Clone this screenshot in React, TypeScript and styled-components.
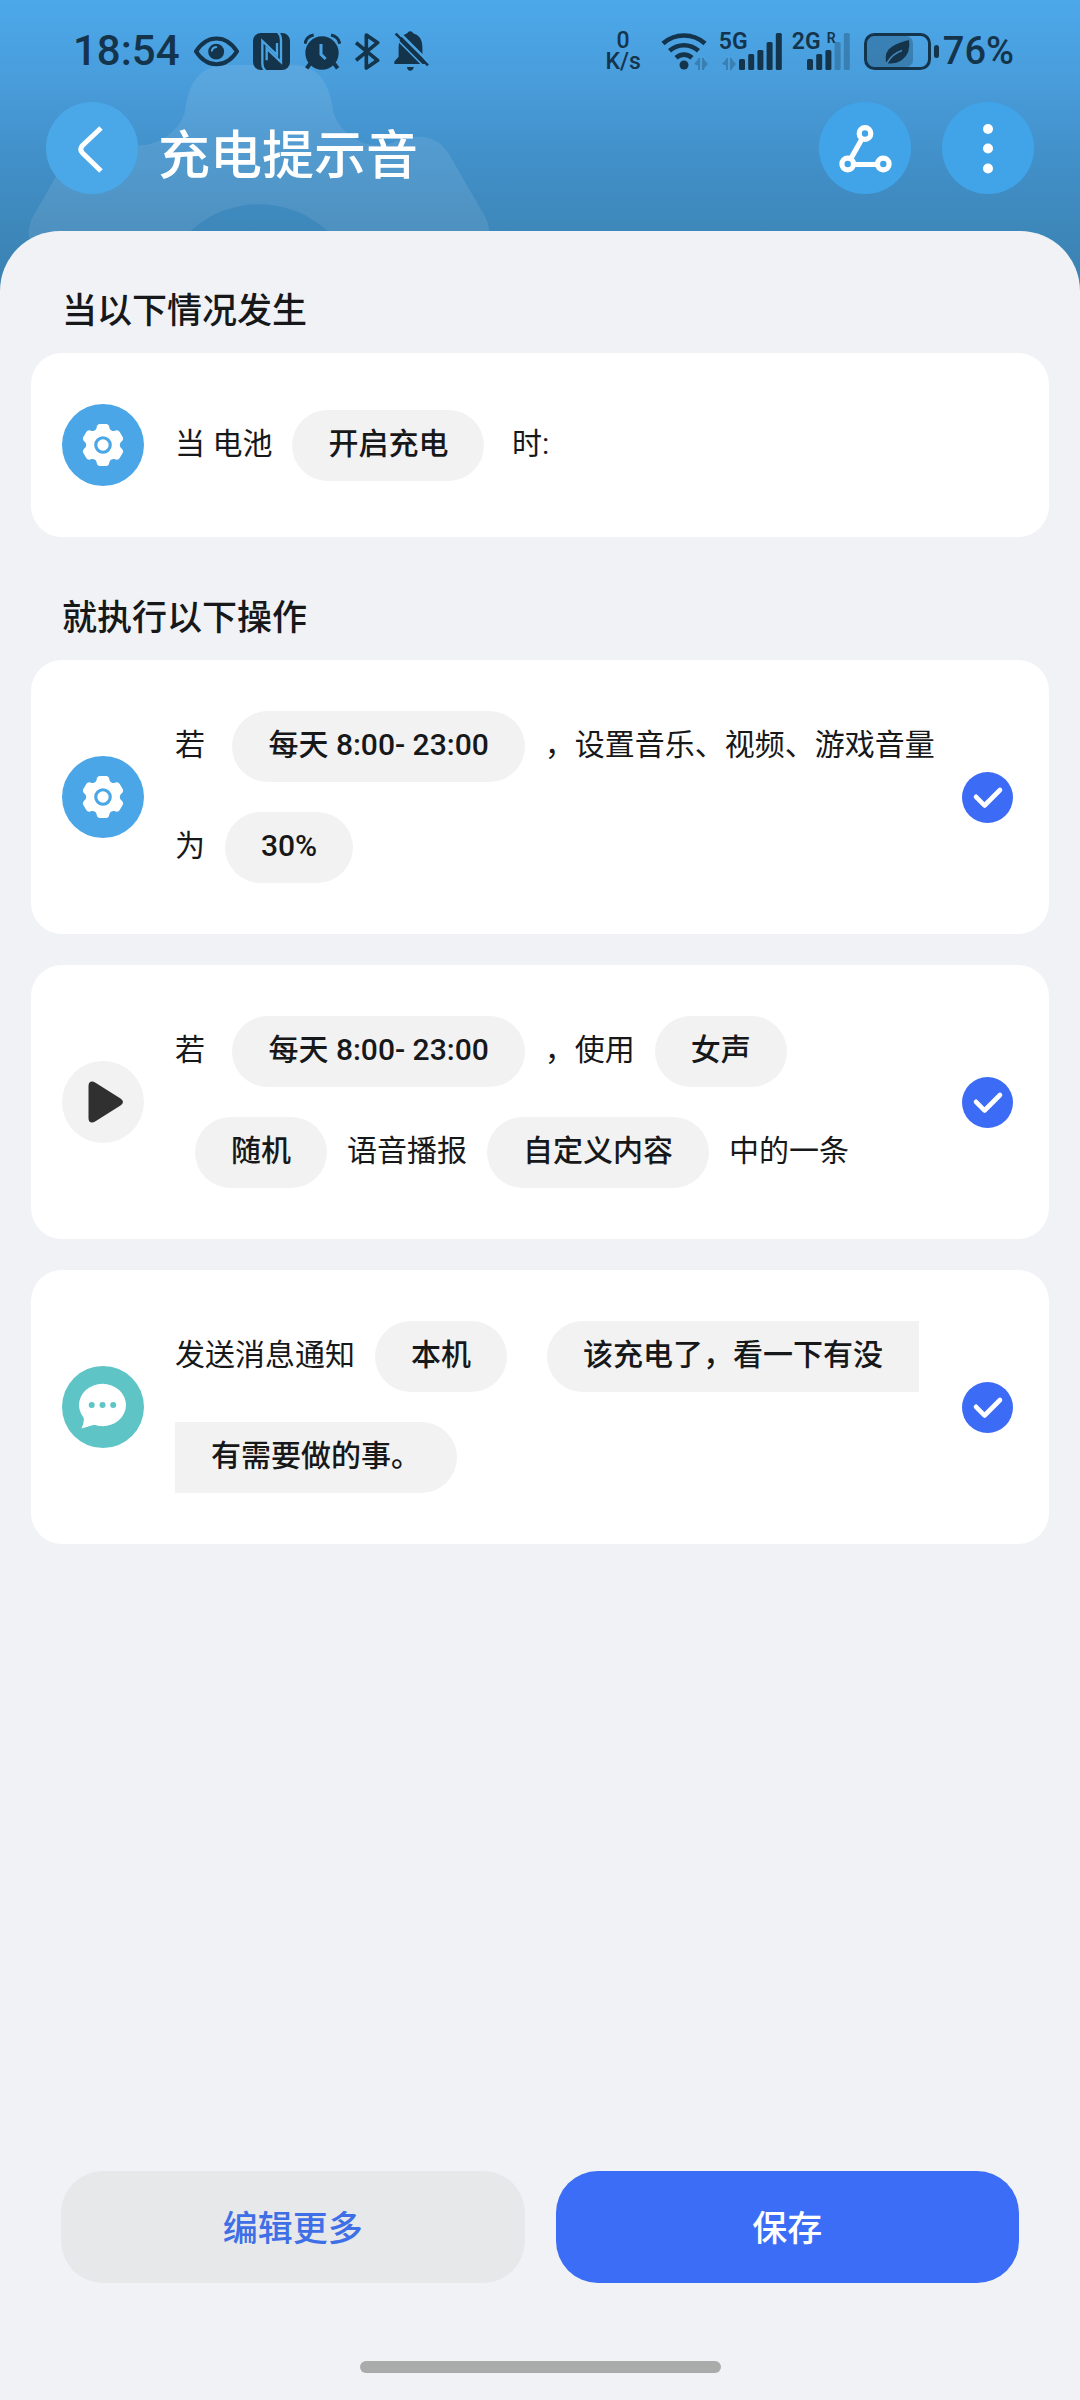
import React from "react";
import styled, { createGlobalStyle, css } from "styled-components";

const INK = "#14344c";
const INK_SOFT = "rgba(20, 52, 76, 0.3)";
const SKY = "#4aa3e2";

const GlobalStyle = createGlobalStyle`
  *, *::before, *::after { box-sizing: border-box; }
  body {
    margin: 0;
    background: #f0f2f6;
    color: #17181a;
    font-family: Roboto, "Noto Sans CJK SC", sans-serif;
  }
  button { font: inherit; color: inherit; border: 0; padding: 0; cursor: pointer; }
  svg { display: block; flex: none; }
`;

const Page = styled.div`
  position: relative;
  display: flex;
  flex-direction: column;
  min-height: 100vh;
  overflow: hidden;
  background: linear-gradient(#4ca8ea 0, #499ddb 80px, #4291cb 150px, #3d87ba 231px, #3b80b0 300px);
`;

const Watermark = styled.div`
  position: absolute;
  top: 65px;
  left: 19px;
  color: rgba(255, 255, 255, 0.09);
  pointer-events: none;
`;

const StatusBar = styled.div`
  position: relative;
  display: flex;
  justify-content: space-between;
  align-items: center;
  height: 102px;
  padding: 0 66px 0 73px;
  color: ${INK};
`;

const StatusGroup = styled.div<{ $gap: number }>`
  display: flex;
  align-items: center;
  gap: ${(p) => p.$gap}px;
`;

const Clock = styled.span`
  font-size: 42px;
  line-height: 48px;
  font-weight: 500;
`;

const BatteryLevel = styled.span`
  font-size: 38px;
  line-height: 48px;
  font-weight: 500;
`;

const NetSpeed = styled.span`
  margin-right: 8px;
  font-size: 23px;
  line-height: 21px;
  font-weight: 500;
  text-align: center;
`;

const Signal = styled.div`
  position: relative;
`;

const SignalLabel = styled.span`
  position: absolute;
  top: -3px;
  left: -2px;
  font-size: 23px;
  line-height: 23px;
  font-weight: 600;
`;

const RoamLabel = styled(SignalLabel)`
  left: 33px;
  font-size: 14px;
  line-height: 16px;
`;

const BatteryGroup = styled.div`
  display: flex;
  align-items: center;
  gap: 4px;
`;

const Header = styled.header`
  position: relative;
  display: flex;
  align-items: center;
  gap: 31px;
  padding: 0 46px 37px;
`;

const RoundButton = styled.button<{ $tone: string }>`
  display: flex;
  flex: none;
  width: 92px;
  height: 92px;
  border-radius: 50%;
  background: ${(p) => p.$tone};
`;

const HeaderLead = styled.div`
  display: flex;
  flex: 1;
  align-items: center;
  gap: 20px;
`;

const Title = styled.h1`
  margin: 0;
  padding-top: 18px;
  color: #fff;
  font-size: 52px;
  line-height: 60px;
  font-weight: 500;
`;

const Sheet = styled.main`
  position: relative;
  display: flex;
  flex: 1;
  flex-direction: column;
  padding: 58px 31px 27px;
  border-radius: 60px 60px 0 0;
  background: #f0f2f6;
`;

const Section = styled.section`
  margin-bottom: 59px;
`;

const SectionTitle = styled.h2`
  margin: 0 0 18px;
  padding-left: 31px;
  font-size: 35px;
  line-height: 46px;
  font-weight: 500;
`;

const CardList = styled.div`
  display: flex;
  flex-direction: column;
  gap: 31px;
`;

const Card = styled.div`
  display: flex;
  align-items: center;
  padding: 51px 36px 51px 31px;
  border-radius: 31px;
  background: #fff;
`;

const CardIcon = styled.span<{ $tone: string; $ink: string }>`
  display: flex;
  flex: none;
  align-items: center;
  justify-content: center;
  width: 82px;
  height: 82px;
  margin-right: 31px;
  border-radius: 50%;
  background: ${(p) => p.$tone};
  color: ${(p) => p.$ink};
`;

const Sentence = styled.div`
  display: flex;
  flex: 1;
  flex-direction: column;
  gap: 30px;
  font-size: 30px;
  line-height: 36px;
`;

const Line = styled.div<{ $indent?: boolean }>`
  display: flex;
  flex-wrap: wrap;
  align-items: center;
  row-gap: 30px;
  padding-left: ${(p) => (p.$indent ? 20 : 0)}px;
`;

const Words = styled.span`
  padding-bottom: 3px;
  white-space: pre;
`;

type Edge = "full" | "start" | "end";

const chipEdge = {
  full: css`
    border-radius: 36px;
  `,
  start: css`
    border-radius: 36px 0 0 36px;
  `,
  end: css`
    border-radius: 0 36px 36px 0;
  `,
};

const Chip = styled.button<{ $edge?: Edge; $flush?: boolean }>`
  height: 71px;
  margin: 0 20px 0 ${(p) => (p.$flush ? 0 : 20)}px;
  padding: 0 36px 3px;
  background: #f2f2f2;
  font-weight: 500;
  ${(p) => chipEdge[p.$edge ?? "full"]}
  ${(p) => p.$edge === "start" && "margin-right: 0;"}
`;

const CheckBox = styled.label`
  position: relative;
  flex: none;
  width: 51px;
  height: 51px;
  color: #fff;

  input {
    position: absolute;
    inset: 0;
    width: 100%;
    height: 100%;
    margin: 0;
    appearance: none;
    border: 3px solid #c4c7cc;
    border-radius: 50%;
  }
  input:checked {
    border: 0;
    background: #3c6cf5;
  }
  svg {
    position: relative;
    pointer-events: none;
  }
`;

const Actions = styled.div`
  display: flex;
  gap: 31px;
  margin-top: auto;
  padding: 0 30px 78px;
`;

const ActionButton = styled.button<{ $primary?: boolean }>`
  flex: 1;
  height: 112px;
  padding-bottom: 4px;
  border-radius: 42px;
  background: ${(p) => (p.$primary ? "#3b6df6" : "#e6e8ea")};
  color: ${(p) => (p.$primary ? "#fff" : "#3f6fe6")};
  font-size: 35px;
  font-weight: 500;
`;

const HomeBar = styled.div`
  align-self: center;
  width: 361px;
  height: 12px;
  border-radius: 6px;
  background: #aaacac;
`;

/* One side of the gear: a rounded tooth pointing up and the valley after it. */
const tooth: [string, [number, number][]][] = [
  ["Q", [[-16.5, -36.8], [-15.5, -40]]],
  ["Q", [[-14.5, -50], [-7, -50]]],
  ["L", [[7, -50]]],
  ["Q", [[14.5, -50], [15.5, -40]]],
  ["Q", [[16.5, -36.8], [20, -34.6]]],
];

function gearOutline() {
  let d = "M-20 -34.6";
  for (let i = 0; i < 6; i++) {
    const a = (i * Math.PI) / 3;
    const turn = ([x, y]: [number, number]) =>
      `${(x * Math.cos(a) - y * Math.sin(a)).toFixed(2)} ${(x * Math.sin(a) + y * Math.cos(a)).toFixed(2)}`;
    tooth.forEach(([cmd, pts]) => {
      d += cmd + pts.map(turn).join(" ");
    });
  }
  return d + "Z";
}

const GEAR = gearOutline();

const GearIcon = ({ size }: { size: number }) => (
  <svg width={size} height={size} viewBox="-50 -50 100 100" fill="currentColor" fillRule="evenodd">
    <path d={GEAR + "M-21 0a21 21 0 1 0 42 0a21 21 0 1 0 -42 0Z"} />
    <circle r="13.5" />
  </svg>
);

const PlayIcon = () => (
  <svg width="82" height="82" viewBox="0 0 82 82" fill="currentColor">
    <path d="M26.500 25Q26.500 20.500 30 20.500Q31.500 20.500 33.500 21.800L58.500 37.500Q61 39.200 61 41Q61 42.800 58.500 44.500L33.500 60.200Q31.500 61.500 30 61.500Q26.500 61.500 26.500 57Z" />
  </svg>
);

const ChatIcon = () => (
  <svg width="82" height="82" viewBox="0 0 82 82" fill="#fff">
    <ellipse cx="40.500" cy="39" rx="23.500" ry="21.200" />
    <path d="M20 46Q24 53 19.500 62.500L33 58.500L36 50Z" />
    <g fill="#5fc4c6">
      <circle cx="29.700" cy="39" r="3" />
      <circle cx="40.500" cy="39" r="3" />
      <circle cx="51.200" cy="39" r="3" />
    </g>
  </svg>
);

const CheckMark = () => (
  <svg width="51" height="51" viewBox="0 0 51 51" fill="none" stroke="currentColor" strokeWidth="4.600" strokeLinecap="round" strokeLinejoin="round">
    <path d="M14 24.800L22.500 33.500L38 18" />
  </svg>
);

const BackIcon = () => (
  <svg width="92" height="92" viewBox="0 0 92 92" fill="none" stroke="#fff" strokeWidth="5">
    <path d="M55 26L36.500 43.500Q33 47.200 36.500 51L55 69" />
  </svg>
);

const FlowIcon = () => (
  <svg width="92" height="92" viewBox="0 0 92 92" fill="none" stroke="#fff" strokeWidth="5.200">
    <circle cx="46" cy="31.500" r="5.800" />
    <circle cx="28.700" cy="62" r="5.800" />
    <circle cx="64.300" cy="62" r="5.800" />
    <path d="M43.200 36.500L31.600 57M34.500 62.500H58.500" />
  </svg>
);

const MoreIcon = () => (
  <svg width="92" height="92" viewBox="0 0 92 92" fill="#fff">
    <circle cx="46" cy="27" r="5" />
    <circle cx="46" cy="46.500" r="5" />
    <circle cx="46" cy="66.500" r="5" />
  </svg>
);

const EyeIcon = () => (
  <svg width="45" height="37" viewBox="21 37 136 111">
    <path d="M27 92Q52 53 89 53Q126 53 151 92Q126 131 89 131Q52 131 27 92Z" fill="none" stroke={INK} strokeWidth="12" strokeLinejoin="round" />
    <circle cx="88" cy="93" r="24" fill={INK} />
    <path d="M75 90Q77 80 88 79" fill="none" stroke={SKY} strokeWidth="6" strokeLinecap="round" />
  </svg>
);

const NfcIcon = () => (
  <svg width="37" height="37" viewBox="0 0 111 111">
    <rect width="111" height="111" rx="24" fill={INK} />
    <g fill="none" stroke={SKY} strokeWidth="7">
      <path d="M38 114Q28 106 28 92V24L72 66V30" />
      <path d="M74 -3Q84 6 84 20V87L41 46V82" />
    </g>
  </svg>
);

const AlarmIcon = () => (
  <svg width="37" height="37" viewBox="356 37 111 111">
    <circle cx="410" cy="97" r="50" fill={INK} />
    <g fill="none" stroke={INK} strokeWidth="13">
      <path d="M375 128L364 143M446 128L457 143" strokeWidth="12" />
      <path d="M359 69Q362 48 385 43M463 69Q460 48 437 43" strokeWidth="9" />
    </g>
    <path d="M407 70V101L421 115" fill="none" stroke={SKY} strokeWidth="9" />
  </svg>
);

const BluetoothIcon = () => (
  <svg width="25" height="37" viewBox="509 35 75 111" fill="none" stroke={INK} strokeWidth="11" strokeLinejoin="round">
    <path d="M512 64L577 117L543 140V41L577 64L512 117" />
  </svg>
);

const BellOffIcon = () => (
  <svg width="35" height="40" viewBox="623 32 106 121">
    <path d="M663 39Q665 33 672 33Q679 33 681 39Q708 46 709 80V108L722 132H624V124L637 110V80Q638 46 663 39Z" fill={INK} />
    <path d="M662 141H683Q681 152 672 152Q664 152 662 141Z" fill={INK} />
    <path d="M636 34L732 130" stroke={SKY} strokeWidth="8" />
    <path d="M622 48L718 144" stroke={SKY} strokeWidth="5" />
    <path d="M628 40L726 136" stroke={INK} strokeWidth="8" />
  </svg>
);

const DataArrows = ({ x }: { x: number }) => (
  <path
    d={`M${x} 31L${x + 4} 26.500V25H${x + 6}V37H${x + 4}V32.500ZM${x + 14} 31L${x + 10} 35.500V37H${x + 8}V25H${x + 10}V26.500Z`}
    fill={INK_SOFT}
  />
);

const WifiIcon = () => (
  <svg width="48" height="37" viewBox="0 0 48 37">
    <g fill="none" stroke={INK} strokeWidth="4.600">
      <path d="M2 10.500Q11 2.500 23 2.500Q35 2.500 44 10.500" />
      <path d="M8.500 17.800Q15 12.200 23 12.200Q31 12.200 37.500 17.800" />
      <path d="M15 24.800Q18.500 21.600 23 21.600Q27.500 21.600 31 24.800" />
    </g>
    <circle cx="23" cy="32" r="4.500" fill={INK} />
    <DataArrows x={33} />
  </svg>
);

const BARS = [26, 21, 17, 9, 0];

const SignalBars = ({ x, width, active, arrows }: { x: number; width: number; active: number; arrows?: boolean }) => (
  <svg width={width} height="37" viewBox={`0 0 ${width} 37`}>
    {BARS.map((top, i) => (
      <rect key={top} x={x + i * 9.2} y={top} width="6" height={37 - top} rx="1.500" fill={i < active ? INK : INK_SOFT} />
    ))}
    {arrows && <DataArrows x={1} />}
  </svg>
);

const BatteryIcon = () => (
  <svg width="75" height="37" viewBox="0 0 75 37">
    <rect x="3" y="3" width="46" height="31" rx="7" fill={INK_SOFT} />
    <rect x="1.500" y="1.500" width="64" height="34" rx="9" fill="none" stroke={INK} strokeWidth="3" />
    <rect x="70" y="12" width="5" height="13" rx="2.500" fill={INK} />
    <path d="M22 29Q20 18 29 13Q35 9.500 45 7Q47 20 38 27Q32 31 24.500 30.500Z" fill={INK} />
    <path d="M23 30Q28 21 38 17.500" fill="none" stroke="#4286b8" strokeWidth="1.600" />
  </svg>
);

const Check = ({ label }: { label: string }) => (
  <CheckBox>
    <input type="checkbox" defaultChecked aria-label={label} />
    <CheckMark />
  </CheckBox>
);

export default function App() {
  return (
    <>
      <GlobalStyle />
      <Page lang="zh-CN">
        <Watermark>
          <GearIcon size={480} />
        </Watermark>

        <StatusBar>
          <StatusGroup $gap={14}>
            <Clock>18:54</Clock>
            <EyeIcon />
            <NfcIcon />
            <AlarmIcon />
            <BluetoothIcon />
            <BellOffIcon />
          </StatusGroup>
          <StatusGroup $gap={12}>
            <NetSpeed>
              0<br />
              K/s
            </NetSpeed>
            <WifiIcon />
            <Signal>
              <SignalLabel>5G</SignalLabel>
              <SignalBars x={18} width={61} active={5} arrows />
            </Signal>
            <Signal>
              <SignalLabel>2G</SignalLabel>
              <RoamLabel>R</RoamLabel>
              <SignalBars x={13} width={58} active={3} />
            </Signal>
            <BatteryGroup>
              <BatteryIcon />
              <BatteryLevel>76%</BatteryLevel>
            </BatteryGroup>
          </StatusGroup>
        </StatusBar>

        <Header>
          <HeaderLead>
            <RoundButton $tone="#4aa8e8" aria-label="返回">
              <BackIcon />
            </RoundButton>
            <Title>充电提示音</Title>
          </HeaderLead>
          <RoundButton $tone="#41a4e8" aria-label="流程">
            <FlowIcon />
          </RoundButton>
          <RoundButton $tone="#41a4e8" aria-label="更多">
            <MoreIcon />
          </RoundButton>
        </Header>

        <Sheet>
          <Section>
            <SectionTitle>当以下情况发生</SectionTitle>
            <Card>
              <CardIcon $tone="#4aa6e6" $ink="#fff">
                <GearIcon size={42} />
              </CardIcon>
              <Sentence>
                <Line>
                  <Words>当 电池</Words>
                  <Chip>开启充电</Chip>
                  <Words> 时:</Words>
                </Line>
              </Sentence>
            </Card>
          </Section>

          <Section>
            <SectionTitle>就执行以下操作</SectionTitle>
            <CardList>
              <Card>
                <CardIcon $tone="#4aa6e6" $ink="#fff">
                  <GearIcon size={42} />
                </CardIcon>
                <Sentence>
                  <Line>
                    <Words>若 </Words>
                    <Chip>每天 8:00- 23:00</Chip>
                    <Words>，设置音乐、视频、游戏音量</Words>
                  </Line>
                  <Line>
                    <Words>为</Words>
                    <Chip>30%</Chip>
                  </Line>
                </Sentence>
                <Check label="设置音量" />
              </Card>

              <Card>
                <CardIcon $tone="#f2f2f2" $ink="#303030">
                  <PlayIcon />
                </CardIcon>
                <Sentence>
                  <Line>
                    <Words>若 </Words>
                    <Chip>每天 8:00- 23:00</Chip>
                    <Words>，使用</Words>
                    <Chip>女声</Chip>
                  </Line>
                  <Line $indent>
                    <Chip $flush>随机</Chip>
                    <Words>语音播报</Words>
                    <Chip>自定义内容</Chip>
                    <Words>中的一条</Words>
                  </Line>
                </Sentence>
                <Check label="语音播报" />
              </Card>

              <Card>
                <CardIcon $tone="#5fc4c6" $ink="#fff">
                  <ChatIcon />
                </CardIcon>
                <Sentence>
                  <Line>
                    <Words>发送消息通知</Words>
                    <Chip>本机</Chip>
                    <Chip $edge="start">该充电了，看一下有没</Chip>
                  </Line>
                  <Line>
                    <Chip $edge="end" $flush>有需要做的事。</Chip>
                  </Line>
                </Sentence>
                <Check label="发送消息通知" />
              </Card>
            </CardList>
          </Section>

          <Actions>
            <ActionButton>编辑更多</ActionButton>
            <ActionButton $primary>保存</ActionButton>
          </Actions>
          <HomeBar />
        </Sheet>
      </Page>
    </>
  );
}
